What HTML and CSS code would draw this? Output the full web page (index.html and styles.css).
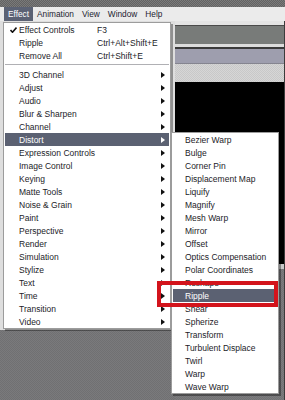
FILE: index.html
```html
<!DOCTYPE html>
<html>
<head>
  <meta charset="utf-8">
  <link rel="stylesheet" href="styles.css">
</head>
<body>
  <div class="app">
    <div class="titlebar"></div>

    <div class="menubar">
      <span class="menubar-item active">Effect</span>
      <span class="menubar-item">Animation</span>
      <span class="menubar-item">View</span>
      <span class="menubar-item">Window</span>
      <span class="menubar-item">Help</span>
    </div>

    <div class="workspace">
      <div class="side-left">
        <div class="panel-light"></div>
      </div>
      <div class="side-right">
        <div class="band band-top"></div>
        <div class="band band-tabs"></div>
        <div class="band band-rule"></div>
        <div class="band band-title"></div>
        <div class="band band-toolbar"></div>
        <div class="band band-viewer"></div>
        <div class="band band-foot"></div>
      </div>
    </div>
  </div>

  <!-- Effect menu -->
  <div class="menu menu-main">
    <div class="menu-row">
      <span class="check">
        <svg width="7" height="6" viewBox="0 0 7 6"><path d="M0.5 3 L2.5 5.2 L6.5 0.6" fill="none" stroke="#111" stroke-width="1.6"/></svg>
      </span>
      <span class="label">Effect Controls</span>
      <span class="shortcut">F3</span>
    </div>
    <div class="menu-row">
      <span class="check"></span>
      <span class="label">Ripple</span>
      <span class="shortcut">Ctrl+Alt+Shift+E</span>
    </div>
    <div class="menu-row">
      <span class="check"></span>
      <span class="label">Remove All</span>
      <span class="shortcut">Ctrl+Shift+E</span>
    </div>
    <div class="separator"></div>
    <div class="menu-row sub"><span class="check"></span><span class="label">3D Channel</span><span class="arrow"></span></div>
    <div class="menu-row sub"><span class="check"></span><span class="label">Adjust</span><span class="arrow"></span></div>
    <div class="menu-row sub"><span class="check"></span><span class="label">Audio</span><span class="arrow"></span></div>
    <div class="menu-row sub"><span class="check"></span><span class="label">Blur &amp; Sharpen</span><span class="arrow"></span></div>
    <div class="menu-row sub"><span class="check"></span><span class="label">Channel</span><span class="arrow"></span></div>
    <div class="menu-row sub selected"><span class="check"></span><span class="label">Distort</span><span class="arrow"></span></div>
    <div class="menu-row sub"><span class="check"></span><span class="label">Expression Controls</span><span class="arrow"></span></div>
    <div class="menu-row sub"><span class="check"></span><span class="label">Image Control</span><span class="arrow"></span></div>
    <div class="menu-row sub"><span class="check"></span><span class="label">Keying</span><span class="arrow"></span></div>
    <div class="menu-row sub"><span class="check"></span><span class="label">Matte Tools</span><span class="arrow"></span></div>
    <div class="menu-row sub"><span class="check"></span><span class="label">Noise &amp; Grain</span><span class="arrow"></span></div>
    <div class="menu-row sub"><span class="check"></span><span class="label">Paint</span><span class="arrow"></span></div>
    <div class="menu-row sub"><span class="check"></span><span class="label">Perspective</span><span class="arrow"></span></div>
    <div class="menu-row sub"><span class="check"></span><span class="label">Render</span><span class="arrow"></span></div>
    <div class="menu-row sub"><span class="check"></span><span class="label">Simulation</span><span class="arrow"></span></div>
    <div class="menu-row sub"><span class="check"></span><span class="label">Stylize</span><span class="arrow"></span></div>
    <div class="menu-row sub"><span class="check"></span><span class="label">Text</span><span class="arrow"></span></div>
    <div class="menu-row sub"><span class="check"></span><span class="label">Time</span><span class="arrow"></span></div>
    <div class="menu-row sub"><span class="check"></span><span class="label">Transition</span><span class="arrow"></span></div>
    <div class="menu-row sub"><span class="check"></span><span class="label">Video</span><span class="arrow"></span></div>
  </div>

  <!-- Distort submenu -->
  <div class="menu menu-sub">
    <div class="menu-row"><span class="label">Bezier Warp</span></div>
    <div class="menu-row"><span class="label">Bulge</span></div>
    <div class="menu-row"><span class="label">Corner Pin</span></div>
    <div class="menu-row"><span class="label">Displacement Map</span></div>
    <div class="menu-row"><span class="label">Liquify</span></div>
    <div class="menu-row"><span class="label">Magnify</span></div>
    <div class="menu-row"><span class="label">Mesh Warp</span></div>
    <div class="menu-row"><span class="label">Mirror</span></div>
    <div class="menu-row"><span class="label">Offset</span></div>
    <div class="menu-row"><span class="label">Optics Compensation</span></div>
    <div class="menu-row"><span class="label">Polar Coordinates</span></div>
    <div class="menu-row"><span class="label">Reshape</span></div>
    <div class="menu-row selected"><span class="label">Ripple</span></div>
    <div class="menu-row"><span class="label">Shear</span></div>
    <div class="menu-row"><span class="label">Spherize</span></div>
    <div class="menu-row"><span class="label">Transform</span></div>
    <div class="menu-row"><span class="label">Turbulent Displace</span></div>
    <div class="menu-row"><span class="label">Twirl</span></div>
    <div class="menu-row"><span class="label">Warp</span></div>
    <div class="menu-row"><span class="label">Wave Warp</span></div>
  </div>

  <div class="callout"></div>
</body>
</html>
```

FILE: styles.css
```css
* {
  margin: 0;
  padding: 0;
  box-sizing: border-box;
}

body {
  width: 285px;
  height: 400px;
  overflow: hidden;
  position: relative;
  font-family: 'Liberation Sans', Arial, sans-serif;
  font-size: 8.5px;
  color: #1c1c28;
  background: #747476;
}

.app {
  display: flex;
  flex-direction: column;
  height: 400px;
}

.titlebar {
  height: 7px;
  background: repeating-conic-gradient(#626262 0 25%, #7a7a7a 0 50%) 0 0 / 2px 2px;
}

.menubar {
  height: 14px;
  display: flex;
  align-items: stretch;
  padding-left: 4px;
  background: #ebebeb;
  font-size: 8.3px;
}

.menubar-item {
  display: flex;
  align-items: center;
  padding: 0 4px;
  color: #1c1c30;
}

.menubar-item.active {
  background: #5b6274;
  color: #fff;
}

.workspace {
  flex: 1;
  display: flex;
}

.side-left {
  width: 175px;
  background: repeating-conic-gradient(#707072 0 25%, #7a7a7c 0 50%) 0 0 / 2px 2px;
}

.panel-light {
  height: 309px;
  background: #dedede;
}

.side-right {
  flex: 1;
  display: flex;
  flex-direction: column;
  background: repeating-conic-gradient(#727274 0 25%, #7c7c7e 0 50%) 0 0 / 2px 2px;
  border-right: 1px solid #3c3c3c;
}

.band-top {
  height: 5px;
  background: #e4e4e4;
  border-bottom: 1px solid #4a4a4a;
}

.band-tabs {
  height: 18px;
  background: #787b79;
}

.band-rule {
  height: 5px;
  background: #dcdcdc;
  border-bottom: 2px solid #3a3a3a;
}

.band-title {
  height: 15px;
  background: #9e9eae;
  border-bottom: 1px solid #858590;
}

.band-toolbar {
  height: 18px;
  background: repeating-conic-gradient(#c8c8c8 0 25%, #d6d6d6 0 50%) 0 0 / 2px 2px;
}

.band-viewer {
  height: 182px;
  background: #000;
}

.band-foot {
  height: 5px;
  background: #c8c8c8;
}

/* menus lie over the window */
.menu {
  position: absolute;
  background: #fff;
  border: 1px solid #9c9c9c;
  box-shadow: 2px 2px 0 rgba(0, 0, 0, 0.35);
}

.menu-main {
  left: 3px;
  top: 22px;
  width: 168px;
}

.menu-sub {
  left: 171px;
  top: 132px;
  width: 108px;
}

.menu-row {
  height: 13px;
  display: flex;
  align-items: center;
  white-space: nowrap;
}

.menu-main .menu-row {
  margin: 0 1px;
}

.menu-sub .menu-row {
  margin: 0 4px 0 1px;
  padding-left: 12px;
}

.menu-row.selected {
  background: #5b6172;
  color: #fff;
}

.check {
  width: 14px;
  display: flex;
  justify-content: center;
  padding-left: 2px;
}

.menu-main .label {
  width: 78px;
}

.shortcut {
  flex: 1;
}

.menu-row.sub .label {
  flex: 1;
}

.arrow {
  width: 0;
  height: 0;
  margin-right: 4px;
  border-left: 4px solid #111;
  border-top: 3.5px solid transparent;
  border-bottom: 3.5px solid transparent;
}

.menu-row.selected .arrow {
  border-left-color: #fff;
}

.separator {
  height: 6px;
  margin: 0 1px;
  display: flex;
  align-items: center;
}

.separator::after {
  content: '';
  flex: 1;
  border-top: 1px solid #b0b0b4;
  border-bottom: 1px solid #fff;
}

.callout {
  position: absolute;
  left: 157px;
  top: 281px;
  width: 121px;
  height: 26px;
  border: 4px solid #d3141c;
}
```
